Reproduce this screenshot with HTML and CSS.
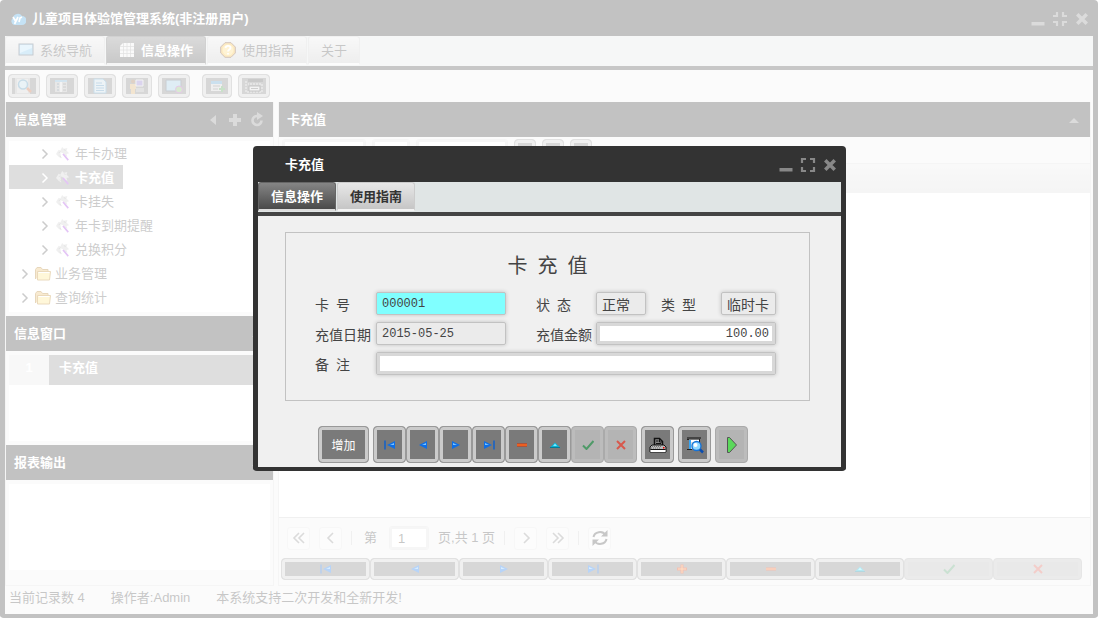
FILE: index.html
```html
<!DOCTYPE html>
<html lang="zh-CN">
<head>
  <meta charset="UTF-8" />
  <meta name="viewport" content="width=device-width, initial-scale=1.0">
  <title>儿童项目体验馆管理系统</title>
  <link rel="stylesheet" href="styles.css">
</head>
<body>

  <!-- icons -->
  <svg class="sprite" aria-hidden="true">
    <symbol id="i-min" viewBox="0 0 16 16"><path d="M1.500 11h13v3.500h-13z" fill="#888"/></symbol>
    <symbol id="i-max" viewBox="0 0 16 16"><path d="M2 6V2h4M10 2h4v4M14 10v4h-4M6 14H2v-4" fill="none" stroke="#888" stroke-width="2.200"/></symbol>
    <symbol id="i-restore" viewBox="0 0 16 16"><path d="M1 5h4V1M11 1v4h4M15 11h-4v4M5 15v-4H1" fill="none" stroke="#888" stroke-width="2.200"/></symbol>
    <symbol id="i-close" viewBox="0 0 16 16"><path d="M4.500 4.500l7 7M11.500 4.500l-7 7" stroke="#888" stroke-width="3.500" stroke-linecap="square"/></symbol>
    <symbol id="i-left" viewBox="0 0 16 16"><path d="M11 3v10L5 8z" fill="#888"/></symbol>
    <symbol id="i-plus" viewBox="0 0 16 16"><path d="M8 2v12M2 8h12" stroke="#888" stroke-width="4"/></symbol>
    <symbol id="i-reload" viewBox="0 0 16 16"><path d="M12.500 8.500a4.500 4.500 0 1 1-4-4.500" fill="none" stroke="#888" stroke-width="2.600"/><path d="M8 0l6 4-6 4z" fill="#888"/></symbol>
    <symbol id="i-up" viewBox="0 0 16 16"><path d="M3 11l5-5 5 5z" fill="#888"/></symbol>
    <symbol id="i-arrow" viewBox="0 0 8 12"><path d="M1.500 1.500L6 6l-4.500 4.500" fill="none" stroke="currentColor" stroke-width="1.500"/></symbol>
    <symbol id="i-wand" viewBox="0 0 16 16"><path d="M0 8l3-5 2 1 2-4 2 2 4-1-1 3 3 3-3 1 1 3-3-1-2-3-3-1 1 7-3-2z" fill="#ccc"/><path d="M3 7l2-2M9 3l2 1M4 10l2 2" stroke="#999" fill="none"/><path d="M8 8l6 7" stroke="#a33be0" stroke-width="1.800"/></symbol>
    <symbol id="i-folder" viewBox="0 0 16 14"><path d="M.5 12V2.500l1.500-2h4l1.500 2H13V5" fill="#e8b962" stroke="#b07a20"/><path d="M2.500 4.500h13l-1 8.500h-12z" fill="#ffe380" stroke="#b88020"/><path d="M3.500 5.500h11" stroke="#fff"/></symbol>
    <symbol id="i-first" viewBox="0 0 12 10"><path d="M1 .5v9" stroke="#0a5fd0" stroke-width="1.400"/><path d="M11 1v8L3 5z" fill="#0f6fe6"/><path d="M10 3v2H6z" fill="#7cc4ff"/></symbol>
    <symbol id="i-prev" viewBox="0 0 12 10"><path d="M10 1v8L2 5z" fill="#0f6fe6"/><path d="M9 3v2H5z" fill="#7cc4ff"/></symbol>
    <symbol id="i-next" viewBox="0 0 12 10"><path d="M2 1v8l8-4z" fill="#0f6fe6"/><path d="M3 3v2h4z" fill="#7cc4ff"/></symbol>
    <symbol id="i-last" viewBox="0 0 12 10"><path d="M11 .5v9" stroke="#0a5fd0" stroke-width="1.400"/><path d="M1 1v8l8-4z" fill="#0f6fe6"/><path d="M2 3v2h4z" fill="#7cc4ff"/></symbol>
    <symbol id="i-add" viewBox="0 0 12 10"><path d="M6 .5v9M1 5h10" stroke="#d92f00" stroke-width="3"/><path d="M6 1v8M2 5h8" stroke="#ff9a3c"/></symbol>
    <symbol id="i-del" viewBox="0 0 12 10"><path d="M1 3.500h10v3H1z" fill="#d92f00"/><path d="M1 4.500h10v1H1z" fill="#ff9040"/></symbol>
    <symbol id="i-edit" viewBox="0 0 12 10"><path d="M.5 8L6 2.500 11.500 8z" fill="#08b4d8"/><path d="M4 6l2-2.500L8 6z" fill="#7ceaff"/><path d="M1 7.500h10" stroke="#067a94"/></symbol>
    <symbol id="i-ok" viewBox="0 0 12 10"><path d="M1 5.500L4.500 9 11.500 1" fill="none" stroke="#4f9a68" stroke-width="2"/></symbol>
    <symbol id="i-no" viewBox="0 0 12 10"><path d="M2 1l8 8M10 1L2 9" stroke="#d8584c" stroke-width="2"/></symbol>
    <symbol id="i-print" viewBox="0 0 18 18"><path d="M5.500 9.500v-7h5l3 3v4z" fill="#888" stroke="#111" stroke-width="1.500"/><path d="M7 5h2.500M7 7.500h5M10.500 2v4h3" stroke="#111" fill="none"/><path d="M3 9h12l2 2v5H1v-5z" fill="#bbb" stroke="#111"/><path d="M1.500 14h15v2h-15z" fill="#fff"/><path d="M1.500 13.500h15" stroke="#111"/><path d="M3 10.500h9M2 12h10" stroke="#777" stroke-dasharray="1 1"/><path d="M14 11h1.500v1.500H14z" fill="#e00"/></symbol>
    <symbol id="i-preview" viewBox="0 0 18 18"><path d="M1 1h14v2H1z" fill="#444"/><path d="M5 4h9v2H5z" fill="#fff"/><path d="M3 4h2v9H3z" fill="#38a6f5"/><path d="M5 6h2v7H5z" fill="#ddd"/><path d="M1 3.500h2M1 13.500h5M13.500 3v3" stroke="#222"/><circle cx="10.500" cy="10" r="4.500" fill="#8fd8ff" stroke="#1573d8" stroke-width="1.300"/><circle cx="9.500" cy="9" r="2" fill="#fff"/><path d="M14 13.500l3 3" stroke="#0a4db0" stroke-width="2.500"/></symbol>
    <symbol id="i-run" viewBox="0 0 18 18"><path d="M4.500 1.500v15h2l7-7.500-7-7.500z" fill="#5bd85b" stroke="#555"/></symbol>
  </svg>

  <div class="window app">
    <header class="window-head">
      <svg class="logo" viewBox="0 0 16 14"><path d="M4 13a4 4 0 0 1-1-7 5 5 0 0 1 9-2 4.500 4.500 0 0 1 0 9z" fill="#3c9fdd"/><path d="M3 5l2.500 4M8 5l-3.500 7M9 10l1-4 2-1" stroke="#fff" stroke-width="1.700" fill="none"/></svg>
      <h1>儿童项目体验馆管理系统(非注册用户)</h1>
      <button class="tool" aria-label="最小化"><svg><use href="#i-min"/></svg></button>
      <button class="tool" aria-label="还原"><svg><use href="#i-restore"/></svg></button>
      <button class="tool" aria-label="关闭"><svg><use href="#i-close"/></svg></button>
    </header>

    <nav class="tabs">
      <button class="tab"><svg viewBox="0 0 16 16"><rect x="1" y="2" width="14" height="11" fill="#7ec3ec" stroke="#456"/><path d="M2 3h12v3L2 11z" fill="#b7e2f8"/></svg>系统导航</button>
      <button class="tab active"><svg viewBox="0 0 16 16"><path d="M1 4l3-3h11v14H1z" fill="#eee"/><path d="M4.500 1v14M8 1v14M11.500 1v14M1 4.500h14M1 8h14M1 11.500h14" stroke="#999" stroke-width=".7"/></svg>信息操作</button>
      <button class="tab"><svg viewBox="0 0 16 16"><path d="M5 .7h6L15.300 5v6L11 15.300H5L.7 11V5z" fill="#f5b933" stroke="#6b3b20"/><circle cx="8" cy="8" r="5.500" fill="#ffd870"/><path d="M5.500 6c.5-3 5-2.500 5 0 0 1.500-2.500 1.500-2.500 3.500M8 11v1.500" stroke="#fff" stroke-width="1.800" fill="none"/></svg>使用指南</button>
      <button class="tab">关于</button>
    </nav>

    <div class="toolbar">
      <button class="btn" aria-label="查询"><svg viewBox="0 0 20 16"><path d="M1 0h15v16H1z" fill="#bbb"/><path d="M3 1h11v14H3z" fill="#ddd"/><circle cx="9" cy="6.500" r="4.500" fill="#c9efff" stroke="#3b8fc0" stroke-width="1.500"/><path d="M13 10l4 4" stroke="#d0551b" stroke-width="2.500"/></svg></button>
      <button class="btn" aria-label="列表"><svg viewBox="0 0 20 16"><path d="M3 2h12v12H3z" fill="#bbb"/><path d="M3 2h12v2H3z" fill="#6bb1dc"/><path d="M5 6h2M5 9h2M5 12h2" stroke="#357"/><path d="M9 4v10" stroke="#eee" stroke-width="2"/><path d="M11 6h3M11 9h3M11 12h3" stroke="#555"/></svg></button>
      <button class="btn" aria-label="文档"><svg viewBox="0 0 20 16"><path d="M4 1h9l3 3v11H4z" fill="#d3ecfa" stroke="#4a9cd0"/><path d="M6 5h6M6 7.500h8M6 10h8M6 12.500h8" stroke="#3b8fc8"/></svg></button>
      <button class="btn narrow" aria-label="人员"><svg viewBox="0 0 20 16"><circle cx="6" cy="3.500" r="2" fill="#a0602a"/><path d="M3 6h6v5H8v5H4v-5H3z" fill="#f0b45c"/><path d="M9 2h7v6H9z" fill="#8a6fd8" stroke="#eee"/><path d="M9 10h8v4H9z" fill="#aaa"/></svg></button>
      <button class="btn" aria-label="网络"><svg viewBox="0 0 20 16"><path d="M2 2h15v11H2z" fill="#9ad4f5" stroke="#456"/><circle cx="15" cy="11.500" r="3.500" fill="#80c860" stroke="#b03bc0"/></svg></button>
      <button class="btn narrow second" aria-label="新增"><svg viewBox="0 0 20 16"><path d="M4 3h11v10H4z" fill="#ddd"/><path d="M4 3h11v3H4z" fill="#4aa0d8"/><path d="M6 8h7M6 11h5" stroke="#666"/><path d="M15 8v6M12 11h6" stroke="#3aa53a" stroke-width="2"/></svg></button>
      <button class="btn" aria-label="窗口"><svg viewBox="0 0 20 16"><path d="M4 1h15v3H4z" fill="#444"/><path d="M2 3v11h16V6H4" fill="none" stroke="#eee" stroke-dasharray="2 1"/><path d="M5 8h11v5H5z" fill="#eee" stroke="#333"/><path d="M7 10.500h7" stroke="#555"/></svg></button>
    </div>

    <div class="main">
      <aside class="side">
        <section class="panel">
          <div class="panel-head">
            <h2>信息管理</h2>
            <svg><use href="#i-left"/></svg>
            <svg><use href="#i-plus"/></svg>
            <svg><use href="#i-reload"/></svg>
          </div>
          <div class="panel-body">
            <ul class="tree">
              <li class="leaf"><a href="#"><svg class="arrow"><use href="#i-arrow"/></svg><svg class="icon"><use href="#i-wand"/></svg>年卡办理</a></li>
              <li class="leaf"><a href="#" class="selected"><svg class="arrow"><use href="#i-arrow"/></svg><svg class="icon"><use href="#i-wand"/></svg>卡充值</a></li>
              <li class="leaf"><a href="#"><svg class="arrow"><use href="#i-arrow"/></svg><svg class="icon"><use href="#i-wand"/></svg>卡挂失</a></li>
              <li class="leaf"><a href="#"><svg class="arrow"><use href="#i-arrow"/></svg><svg class="icon"><use href="#i-wand"/></svg>年卡到期提醒</a></li>
              <li class="leaf"><a href="#"><svg class="arrow"><use href="#i-arrow"/></svg><svg class="icon"><use href="#i-wand"/></svg>兑换积分</a></li>
              <li><a href="#"><svg class="arrow"><use href="#i-arrow"/></svg><svg class="icon"><use href="#i-folder"/></svg>业务管理</a></li>
              <li><a href="#"><svg class="arrow"><use href="#i-arrow"/></svg><svg class="icon"><use href="#i-folder"/></svg>查询统计</a></li>
            </ul>
          </div>
        </section>
        <section class="panel">
          <div class="panel-head"><h2>信息窗口</h2><svg><use href="#i-up"/></svg></div>
          <div class="panel-body">
            <div class="list">
              <div class="list-row"><span class="num">1</span><span class="name">卡充值</span></div>
            </div>
          </div>
        </section>
        <section class="panel grow">
          <div class="panel-head"><h2>报表输出</h2><svg><use href="#i-up"/></svg></div>
          <div class="panel-body output"></div>
        </section>
      </aside>

      <section class="content">
        <div class="panel-head"><h2>卡充值</h2><svg><use href="#i-up"/></svg></div>
        <div class="filter">
          <input type="text" class="box w-field" aria-label="字段">
          <input type="text" class="box w-op" aria-label="条件">
          <input type="text" class="box w-value" aria-label="值">
          <button class="btn" aria-label="查找"></button>
          <button class="btn" aria-label="筛选"></button>
          <button class="btn" aria-label="刷新"></button>
        </div>
        <div class="grid-head"></div>
        <div class="grid-body"></div>
        <div class="pager">
          <button class="page" aria-label="首页"><svg viewBox="0 0 16 16"><path d="M8 3L3 8l5 5M13 3L8 8l5 5" fill="none" stroke="#888" stroke-width="1.600"/></svg></button>
          <button class="page" aria-label="上一页"><svg viewBox="0 0 16 16"><path d="M10 3L5 8l5 5" fill="none" stroke="#888" stroke-width="1.600"/></svg></button>
          <span class="sep"></span>
          <label for="pageNo">第</label>
          <input id="pageNo" class="box" type="text" value="1">
          <span>页,共 1 页</span>
          <span class="sep"></span>
          <button class="page" aria-label="下一页"><svg viewBox="0 0 16 16"><path d="M6 3l5 5-5 5" fill="none" stroke="#888" stroke-width="1.600"/></svg></button>
          <button class="page" aria-label="末页"><svg viewBox="0 0 16 16"><path d="M3 3l5 5-5 5M8 3l5 5-5 5" fill="none" stroke="#888" stroke-width="1.600"/></svg></button>
          <span class="sep"></span>
          <button class="page" aria-label="刷新"><svg viewBox="0 0 16 16"><path d="M1.500 7a6.500 6 0 0 1 12-2M14.500 9a6.500 6 0 0 1-12 2" fill="none" stroke="#444" stroke-width="2"/><path d="M15.500 0v6.500H9zM.5 16V9.500H7z" fill="#444"/></svg></button>
        </div>
        <div class="record-nav">
          <button class="btn" aria-label="第一条"><svg><use href="#i-first"/></svg></button>
          <button class="btn" aria-label="上一条"><svg><use href="#i-prev"/></svg></button>
          <button class="btn" aria-label="下一条"><svg><use href="#i-next"/></svg></button>
          <button class="btn" aria-label="最后一条"><svg><use href="#i-last"/></svg></button>
          <button class="btn" aria-label="添加"><svg><use href="#i-add"/></svg></button>
          <button class="btn" aria-label="删除"><svg><use href="#i-del"/></svg></button>
          <button class="btn" aria-label="修改"><svg><use href="#i-edit"/></svg></button>
          <button class="btn" aria-label="保存" disabled><svg><use href="#i-ok"/></svg></button>
          <button class="btn" aria-label="取消" disabled><svg><use href="#i-no"/></svg></button>
        </div>
      </section>
    </div>

    <footer class="status">
      <span>当前记录数 4</span>
      <span>操作者:Admin</span>
      <span>本系统支持二次开发和全新开发!</span>
    </footer>
  </div>

  <div class="mask">
    <div class="window dialog" role="dialog" aria-labelledby="dialogTitle">
      <header class="window-head">
        <h2 id="dialogTitle">卡充值</h2>
        <button class="tool" aria-label="最小化"><svg><use href="#i-min"/></svg></button>
        <button class="tool" aria-label="最大化"><svg><use href="#i-max"/></svg></button>
        <button class="tool" aria-label="关闭"><svg><use href="#i-close"/></svg></button>
      </header>
      <nav class="tabs">
        <button class="tab active">信息操作</button>
        <button class="tab">使用指南</button>
      </nav>
      <form class="card-form">
        <h3>卡&nbsp;&nbsp;充&nbsp;&nbsp;值</h3>
        <div class="fields">
          <label for="cardNo">卡&nbsp;&nbsp;号</label>
          <input id="cardNo" class="current" type="text" value="000001" readonly>
          <label for="state">状&nbsp;&nbsp;态</label>
          <input id="state" class="short cjk" type="text" value="正常" readonly>
          <label for="kind">类&nbsp;&nbsp;型</label>
          <input id="kind" class="kind cjk" type="text" value="临时卡" readonly>
          <label for="date">充值日期</label>
          <input id="date" type="text" value="2015-05-25" readonly>
          <label for="amount">充值金额</label>
          <input id="amount" class="amount" type="text" value="100.00">
          <label for="remark">备&nbsp;&nbsp;注</label>
          <input id="remark" class="remark" type="text">
        </div>
      </form>
      <div class="actions">
        <button class="btn text">增加</button>
        <div class="group">
          <button class="btn" aria-label="第一条"><svg><use href="#i-first"/></svg></button>
          <button class="btn" aria-label="上一条"><svg><use href="#i-prev"/></svg></button>
          <button class="btn" aria-label="下一条"><svg><use href="#i-next"/></svg></button>
          <button class="btn" aria-label="最后一条"><svg><use href="#i-last"/></svg></button>
          <button class="btn" aria-label="删除"><svg><use href="#i-del"/></svg></button>
          <button class="btn" aria-label="修改"><svg><use href="#i-edit"/></svg></button>
          <button class="btn" aria-label="保存" disabled><svg><use href="#i-ok"/></svg></button>
          <button class="btn" aria-label="取消" disabled><svg><use href="#i-no"/></svg></button>
        </div>
        <button class="btn big" aria-label="打印"><svg><use href="#i-print"/></svg></button>
        <button class="btn big" aria-label="预览"><svg><use href="#i-preview"/></svg></button>
        <button class="btn big" aria-label="执行" disabled><svg><use href="#i-run"/></svg></button>
      </div>
    </div>
  </div>

</body>
</html>
```
FILE: styles.css
```css
* {
  box-sizing: border-box;
}

body {
  margin: 0;
  background: #fff;
  font-family: "Liberation Sans", "Noto Sans CJK SC", sans-serif;
  font-size: 13px;
  line-height: 20px;
  color: #444;
}

button,
input {
  font: inherit;
  color: inherit;
  margin: 0;
  padding: 0;
}

h1, h2, h3, ul {
  margin: 0;
  padding: 0;
}

svg {
  display: block;
  width: 16px;
  height: 16px;
  flex: none;
}

.sprite {
  position: absolute;
  width: 0;
  height: 0;
}

/* windows */
.window {
  display: flex;
  flex-direction: column;
  background: #f0f0f0;
  border: 4px solid #333;
  border-width: 0 5px 4px;
  border-radius: 4px;
}

.app {
  min-height: 100vh;
  margin-right: 1px;
}

.window-head {
  display: flex;
  align-items: center;
  gap: 6px;
  height: 36px;
  padding: 2px 3px 0 5px;
  background: #333;
  color: #fff;
}

.window-head h1,
.window-head h2 {
  flex: 1;
  font-size: 13px;
  font-weight: bold;
}

.tool {
  background: none;
  border: none;
  cursor: pointer;
}

/* tabs */
.tabs {
  display: flex;
  gap: 1px;
  height: 34px;
  background: #e0e5e5;
  border-bottom: 4px solid #444;
}

.tab {
  display: flex;
  align-items: center;
  gap: 6px;
  height: 29px;
  padding: 2px 12px 0;
  border: 1px solid #ccc;
  border-bottom: 2px solid #f4f4f4;
  border-radius: 3px 3px 0 0;
  background: linear-gradient(#e8e8e8, #c6c6c6);
  cursor: pointer;
}

.tab.active {
  color: #fff;
  font-weight: bold;
  background: linear-gradient(#858585, #4a4a4a);
  border-color: #666;
  border-bottom-color: #ddd;
}

.app .tab svg {
  margin-top: -3px;
}

/* buttons */
.btn {
  display: flex;
  align-items: center;
  justify-content: center;
  background: #7a7a7a;
  border: 1px solid #999;
  border-radius: 4px;
  box-shadow: inset 0 0 0 3px #cbcbcb;
  cursor: pointer;
}

.btn:disabled {
  background: #b4b4b4;
  border-color: #aaa;
  box-shadow: inset 0 0 0 3px #bcbcbc;
}

.btn svg {
  width: 12px;
  height: 10px;
}

.toolbar {
  display: flex;
  align-items: center;
  gap: 6px;
  height: 32px;
  padding: 0 3px;
}

.toolbar .btn {
  width: 32px;
  height: 24px;
}

.toolbar .btn.narrow {
  width: 30px;
}

.toolbar .btn.second {
  margin-left: 6px;
}

.toolbar .btn svg {
  width: 20px;
  height: 16px;
  opacity: 0.8;
}

/* panels */
.main {
  flex: 1;
  display: flex;
  gap: 4px;
  padding-right: 2px;
}

.side {
  display: flex;
  flex-direction: column;
  width: 269px;
  border: 1px solid #ddd;
  border-top: none;
}

.panel.grow {
  flex: 1;
  display: flex;
  flex-direction: column;
}

.panel-head {
  display: flex;
  align-items: center;
  gap: 6px;
  height: 35px;
  padding: 0 8px;
  background: #333;
  color: #fff;
}

.panel-head h2 {
  flex: 1;
  font-size: 13px;
}

.panel-body {
  padding: 4px 3px;
}

.tree {
  height: 171px;
  list-style: none;
  background: #fff;
}

.tree li {
  display: flex;
  height: 24px;
}

.tree a {
  display: flex;
  align-items: center;
  gap: 4px;
  padding: 1px 9px 0 12px;
  color: #555;
  text-decoration: none;
}

.tree .leaf a {
  padding-left: 32px;
}

.tree a.selected {
  background: #919191;
  color: #fff;
  font-weight: bold;
}

.tree .arrow {
  width: 8px;
  height: 12px;
  margin-right: 2px;
}

.tree .icon {
  width: 16px;
  height: 14px;
}

.list {
  height: 86px;
  background: #fff;
}

.list-row {
  display: flex;
  height: 30px;
  line-height: 26px;
  color: #fff;
  font-weight: bold;
  background: #919191;
}

.list-row .num {
  width: 40px;
  background: #e6e6e6;
  text-align: center;
}

.list-row .name {
  padding-left: 10px;
}

.panel-body.output {
  flex: 1;
  margin: 4px 3px 15px;
  background: #fff;
}

/* content */
.content {
  flex: 1;
  display: flex;
  flex-direction: column;
  border: 1px solid #ddd;
  border-top: none;
}

.filter {
  display: flex;
  gap: 6px;
  height: 27px;
  padding: 2px 3px;
  border-bottom: 1px solid #ddd;
}

.box {
  background: #fff;
  border: 1px solid #ddd;
  border-radius: 3px;
  box-shadow: inset 0 0 0 2px #e2e2e2;
}

.w-field {
  width: 84px;
}

.w-op {
  width: 38px;
}

.w-value {
  width: 92px;
}

.filter .btn {
  width: 22px;
  height: 22px;
}

.grid-head {
  height: 29px;
  background: linear-gradient(#ebebeb, #dcdcdc);
}

.grid-body {
  flex: 1;
  background: #fff;
  border-bottom: 1px solid #ccc;
}

.pager {
  display: flex;
  align-items: center;
  gap: 9px;
  height: 40px;
  padding: 0 8px;
}

.page {
  display: grid;
  place-items: center;
  width: 23px;
  height: 23px;
  background: #f3f3f3;
  border: 1px solid #e4e4e4;
  border-radius: 3px;
}

.pager label {
  padding: 0 3px;
}

.pager .box {
  width: 40px;
  height: 24px;
  padding: 0 8px;
}

.pager .sep {
  width: 1px;
  height: 14px;
  background: #ccc;
}

.record-nav {
  display: flex;
  padding: 0 8px 5px 2px;
}

.record-nav .btn {
  flex: 1;
  height: 22px;
}

.status {
  display: flex;
  gap: 26px;
  height: 28px;
  padding: 2px 4px;
}

/* dialog */
.mask {
  position: fixed;
  inset: 0;
  display: grid;
  place-items: center;
  padding-bottom: 1px;
  background: rgba(255, 255, 255, 0.7);
}

.dialog {
  width: 593px;
}

.dialog .window-head {
  padding-left: 27px;
}

.dialog .tab {
  font-weight: bold;
  color: #333;
}

.dialog .tab.active {
  color: #fff;
}

.card-form {
  margin: 16px 31px 0 27px;
  padding: 20px 29px 25px;
  border: 1px solid #c2c2c2;
  font-family: "Liberation Serif", "Noto Sans CJK SC", sans-serif;
  font-size: 14px;
}

.card-form h3 {
  font-size: 20px;
  font-weight: normal;
  line-height: 26px;
  text-align: center;
}

.fields {
  display: grid;
  grid-template-columns: 61px 160px 60px 65px 60px 55px;
  row-gap: 7px;
  margin-top: 13px;
}

.fields label {
  padding-top: 4px;
  line-height: 19px;
}

.fields input {
  width: 130px;
  height: 23px;
  padding: 0 5px;
  background: #fff;
  border: 1px solid #c2c2c2;
  border-radius: 2px;
  box-shadow: inset 0 0 0 3px #d8d8d8, 0 0 4px rgba(0, 0, 0, 0.2);
  font-family: "Liberation Mono", "Noto Sans CJK SC", monospace;
  font-size: 12px;
}

.fields input:read-only {
  background: #ebebeb;
  box-shadow: 0 0 4px rgba(0, 0, 0, 0.2);
}

.fields input.current {
  background: #80ffff;
}

.fields input.cjk {
  font-size: 14px;
}

.fields input.short {
  width: 50px;
}

.fields input.kind {
  width: 100%;
}

.fields input.amount {
  grid-column: span 3;
  width: 100%;
  padding-right: 6px;
  text-align: right;
}

.fields input.remark {
  grid-column: span 5;
  width: 100%;
}

.actions {
  display: flex;
  gap: 4px;
  padding: 25px 0 4px 60px;
}

.actions .group {
  display: flex;
}

.actions .btn {
  width: 33px;
  height: 37px;
}

.actions .btn.text {
  width: 51px;
  padding-top: 3px;
  color: #fff;
  font-size: 12px;
}

.actions .btn.big svg {
  width: 18px;
  height: 18px;
}
```
